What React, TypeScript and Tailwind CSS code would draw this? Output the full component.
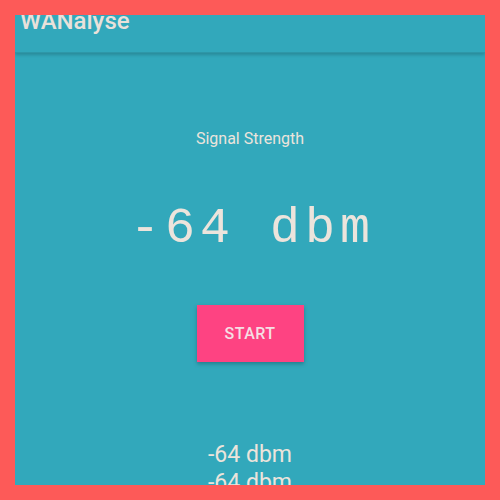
import React from 'react';

export default function App() {
  return (
    <div className="w-[500px] h-[500px] bg-[#fd5a58] p-[15px]">
      <div className="w-full h-full overflow-hidden bg-[#32a8bb] flex flex-col" style={{ fontFamily: 'Roboto, "Noto Sans", sans-serif' }}>
        {/* toolbar */}
        <div className="h-[38px] shrink-0 relative shadow-[0_2px_3px_rgba(0,0,0,0.18)] border-b border-[#2e97a8]">
          <div className="pl-[5px] -mt-[9px] text-[24px] font-medium leading-[30px] text-[#e9e1da]">WANalyse</div>
        </div>

        <div className="flex flex-col items-center text-[#ece4dc]">
          <div className="mt-[74px] text-[16px] leading-[24px]">Signal Strength</div>
          <div
            className="mt-[50px] text-[50px] leading-[56px] tracking-[5px] pl-[5px]"
            style={{ fontFamily: '"Liberation Mono", "Courier New", monospace' }}
          >
            -64 dbm
          </div>
          <button className="mt-[48px] w-[107px] h-[57px] bg-[#fe4382] text-[#f5dfe4] text-[16px] font-medium tracking-[0.5px] shadow-[0_2px_4px_rgba(0,0,0,0.25)]">
            START
          </button>
          <div className="mt-[79px] text-[23px] leading-[28px]">-64 dbm</div>
          <div className="text-[23px] leading-[28px]">-64 dbm</div>
        </div>
      </div>
    </div>
  );
}
